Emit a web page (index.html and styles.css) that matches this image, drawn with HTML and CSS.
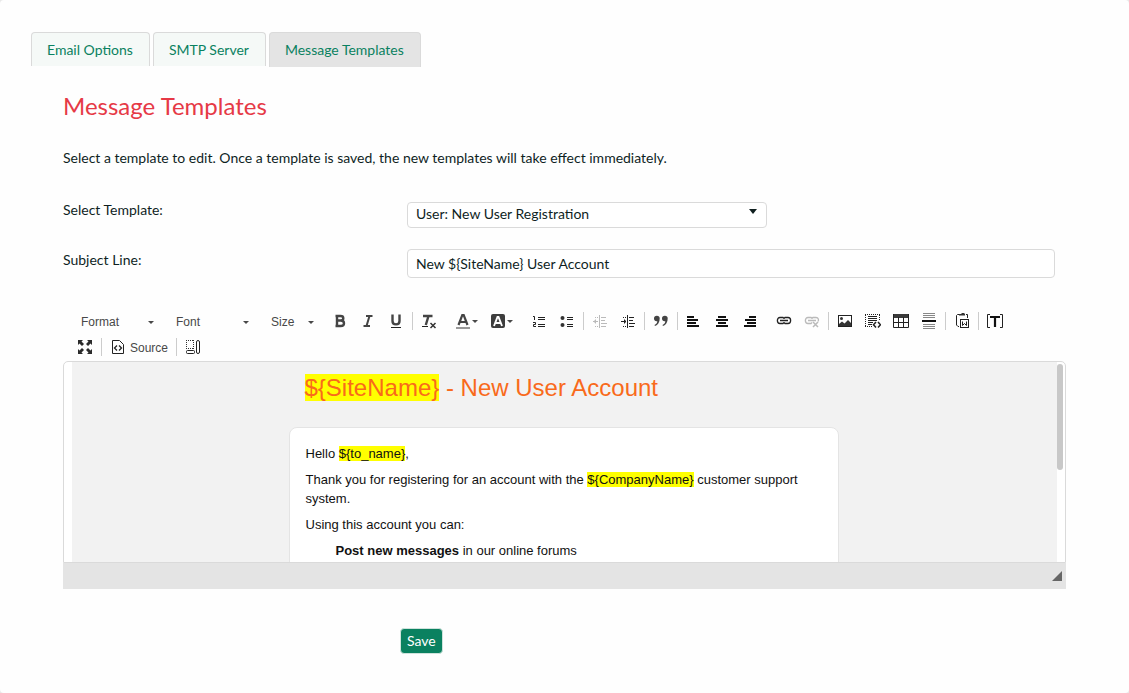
FILE: index.html
```html
<!DOCTYPE html>
<html lang="en">
<head>
<meta charset="utf-8">
<title>Message Templates</title>
<link rel="stylesheet" href="styles.css">
</head>
<body>
<main class="page">
  <nav class="tabs">
    <a class="tab" href="#options">Email Options</a>
    <a class="tab" href="#smtp">SMTP Server</a>
    <a class="tab tab-active" href="#templates" aria-current="page">Message Templates</a>
  </nav>
  <form class="content">
    <h1 class="title">Message Templates</h1>
    <p class="intro">Select a template to edit. Once a template is saved, the new templates will take effect immediately.</p>
    <div class="field">
      <label class="label" for="template">Select Template:</label>
      <div class="select-wrap">
        <select class="select" id="template"><option>User: New User Registration</option></select>
      </div>
    </div>
    <div class="field field-text">
      <label class="label" for="subject">Subject Line:</label>
      <input class="input" id="subject" type="text" value="New ${SiteName} User Account">
    </div>

    <div class="editor">
      <div class="toolbar">
        <div class="row">
          <div class="group combos">
            <button type="button" class="combo">Format<i class="arrow"></i></button>
            <button type="button" class="combo">Font<i class="arrow"></i></button>
            <button type="button" class="combo combo-small">Size<i class="arrow"></i></button>
          </div>
          <div class="group">
            <button type="button" class="tool" aria-label="Bold"><svg viewBox="0 0 16 16"><path d="M3.500 3H8.500C10.500 3 11.300 3.800 11.300 5.200S10.300 7.500 8.800 7.500H5.500M8.800 7.500C11 7.500 12 8.500 12 10.200S10.800 13 8.700 13H3.500M5 2V14" fill="none" stroke="#444" stroke-width="2.400"/></svg></button>
            <button type="button" class="tool" aria-label="Italic"><svg viewBox="0 0 16 16"><path d="M6 3H12.500M3.500 13H10M9.500 3L6.500 13" fill="none" stroke="#444" stroke-width="2"/></svg></button>
            <button type="button" class="tool" aria-label="Underline"><svg viewBox="0 0 16 16"><path d="M4.500 1.500V8C4.500 12.500 11.500 12.500 11.500 8V1.500" fill="none" stroke="#444" stroke-width="2.400"/><path d="M3 14.500H13" stroke="#222"/></svg></button>
            <i class="sep"></i>
            <button type="button" class="tool" aria-label="Remove format"><svg viewBox="0 0 16 16"><path d="M2 3H11.500M7.500 3L4.800 12" fill="none" stroke="#444" stroke-width="2.400"/><path d="M1 13.500H7" stroke="#222"/><path d="M9.500 10L14.500 15M14.500 10L9.500 15" stroke="#333" stroke-width="1.500"/></svg></button>
          </div>
          <div class="group">
            <button type="button" class="tool tool-menu" aria-label="Text color"><svg viewBox="0 0 16 16"><path d="M3.500 12L7.300 2H8.700L12.500 12M5 9H11" fill="none" stroke="#444" stroke-width="2.200"/><path d="M1 15H15" stroke="#999" stroke-width="2"/></svg><i class="arrow"></i></button>
            <button type="button" class="tool tool-menu" aria-label="Background color"><svg viewBox="0 0 16 16"><rect x="1" y="1" width="14" height="14" rx="2" fill="#3d3d3d"/><path d="M4 13L7.500 4H8.500L12 13M5.500 10H10.500" fill="none" stroke="#fff" stroke-width="1.900"/></svg><i class="arrow"></i></button>
          </div>
          <div class="group">
            <button type="button" class="tool" aria-label="Numbered list"><svg viewBox="0 0 16 16"><path d="M2 3.500H3.500V7M2 9.500H4.500V11.500H2.500V13.500H5M7 4.500H14M7 6.500H14M7 11.500H14M7 13.500H14" fill="none" stroke="#222"/></svg></button>
            <button type="button" class="tool" aria-label="Bulleted list"><svg viewBox="0 0 16 16"><circle cx="3.500" cy="5" r="2" fill="#333"/><circle cx="3.500" cy="12" r="2" fill="#333"/><path d="M8 4.500H14M8 6.500H14M8 11.500H14M8 13.500H14" stroke="#222"/></svg></button>
            <i class="sep"></i>
            <button type="button" class="tool" aria-label="Decrease indent" disabled><svg viewBox="0 0 16 16"><path d="M1 8.500H6M3.500 6.500V10.500M2.500 7.500V9.500M7.500 2V15M9 4.500H14M9 7.500H13M9 10.500H15M9 13.500H14" fill="none" stroke="#222"/><path d="M3 4.500H7M3 13.500H7" stroke="#222" stroke-dasharray="1 1"/></svg></button>
            <button type="button" class="tool" aria-label="Increase indent"><svg viewBox="0 0 16 16"><path d="M1 8.500H6M4.500 6.500V10.500M5.500 7.500V9.500M7.500 2V15M9 4.500H14M9 7.500H13M9 10.500H15M9 13.500H14" fill="none" stroke="#222"/><path d="M3 4.500H7M3 13.500H7" stroke="#222" stroke-dasharray="1 1"/></svg></button>
            <i class="sep"></i>
            <button type="button" class="tool" aria-label="Block quote"><svg viewBox="0 0 16 16"><path d="M1 5.500A2.800 2.800 0 1 1 6.700 5.500C6.700 9 5 12 2 13L1.500 12C3.300 11 4.200 10 4.300 8.200C2.500 8.600 1 7.500 1 5.500ZM9 5.500A2.800 2.800 0 1 1 14.700 5.500C14.700 9 13 12 10 13L9.500 12C11.300 11 12.200 10 12.300 8.200C10.500 8.600 9 7.500 9 5.500Z" fill="#444"/></svg></button>
            <i class="sep"></i>
            <button type="button" class="tool" aria-label="Align left"><svg viewBox="0 0 16 16"><path d="M1 4H8M1 7H12M1 10H10M1 13H13" stroke="#111" stroke-width="2" shape-rendering="crispEdges"/></svg></button>
            <button type="button" class="tool" aria-label="Center"><svg viewBox="0 0 16 16"><path d="M4 4H12M2 7H14M4 10H12M2 13H14" stroke="#111" stroke-width="2" shape-rendering="crispEdges"/></svg></button>
            <button type="button" class="tool" aria-label="Align right"><svg viewBox="0 0 16 16"><path d="M7 4H14M3 7H14M5 10H14M2 13H14" stroke="#111" stroke-width="2" shape-rendering="crispEdges"/></svg></button>
          </div>
          <div class="group">
            <button type="button" class="tool" aria-label="Link"><svg viewBox="0 0 16 16"><path d="M8 5.500L7 4.500H4C.5 4.500 .5 10.500 4 10.500H7L8 9.500M8 5.500L9 4.500H12C15.500 4.500 15.500 10.500 12 10.500H9L8 9.500M4 7.500H12" fill="none" stroke="#222" stroke-width="1.300"/></svg></button>
            <button type="button" class="tool" aria-label="Unlink" disabled><svg viewBox="0 0 16 16"><path d="M8 5.500L7 4.500H4C.5 4.500 .5 10.500 4 10.500H7L8 9.500M8 5.500L9 4.500H12C14.500 4.500 15 7 14 8.500M4 7.500H12" fill="none" stroke="#222" stroke-width="1.300"/><path d="M9 9L14 14M14 9L9 14" stroke="#222" stroke-width="1.500"/></svg></button>
            <i class="sep"></i>
            <button type="button" class="tool" aria-label="Image"><svg viewBox="0 0 16 16"><rect x="1.500" y="2.500" width="13" height="11" fill="none" stroke="#222"/><path d="M2 13V11L5 8.500L7.500 10.500L11 7L14 10V13Z" fill="#333"/><circle cx="4.500" cy="5.500" r="1.500" fill="#333"/></svg></button>
            <button type="button" class="tool" aria-label="Code snippet"><svg viewBox="0 0 16 16"><path d="M0 1.500H15M14.500 2V8M.5 2V14M0 13.500H8" fill="none" stroke="#222" stroke-width="1" stroke-dasharray="1 1"/><path d="M3 3.500H12M3 5.500H12M3 7.500H12M3 9.500H8M3 11.500H7" stroke="#222"/><path d="M11 9L8.500 11.800L11 14.500M13 9L15.500 11.800L13 14.500" fill="none" stroke="#222" stroke-width="1.500"/></svg></button>
            <button type="button" class="tool" aria-label="Table"><svg viewBox="0 0 16 16"><path d="M0 1H16V5H0Z" fill="#3a3a3a"/><path d="M.5 1V14.500H15.500V1M0 9.500H16M5.500 4V15M10.500 4V15" fill="none" stroke="#222"/></svg></button>
            <button type="button" class="tool" aria-label="Page break"><svg viewBox="0 0 16 16"><path d="M2 .5H14M2 2.500H14M2 4.500H14M2 11.500H14M2 13.500H14M2 15.500H14" stroke="#888"/><path d="M1 8H15" stroke="#111" stroke-width="2"/></svg></button>
            <i class="sep"></i>
            <button type="button" class="tool" aria-label="Paste from Word"><svg viewBox="0 0 16 16"><path d="M5 1.500H3.500L2.500 2.500V12L4 13.500H5M12 1.500H13.500V5" fill="none" stroke="#222"/><path d="M5 2.500V1H7L8 0H10L11 1V2.500Z" fill="#333"/><rect x="6.500" y="6.500" width="8" height="8" fill="none" stroke="#222"/><path d="M8.500 8.500V12.500L10.500 10.500L12.500 12.500V8.500" fill="none" stroke="#222"/></svg></button>
            <i class="sep"></i>
            <button type="button" class="tool" aria-label="Insert token"><svg viewBox="0 0 18 16"><path d="M4 1.500H1.500V14.500H4M14 1.500H16.500V14.500H14" fill="none" stroke="#222"/><path d="M4 4H14M9 4V14" fill="none" stroke="#111" stroke-width="2.200"/></svg></button>
          </div>
        </div>
        <div class="row">
          <div class="group">
            <button type="button" class="tool" aria-label="Maximize"><svg viewBox="0 0 16 16"><path d="M1 1H6L4.500 2.500L7 5L5 7L2.500 4.500L1 6ZM15 1H10L11.500 2.500L9 5L11 7L13.500 4.500L15 6ZM1 15H6L4.500 13.500L7 11L5 9L2.500 11.500L1 10ZM15 15H10L11.500 13.500L9 11L11 9L13.500 11.500L15 10Z" fill="#2b2b2b"/></svg></button>
            <i class="sep"></i>
            <button type="button" class="tool tool-text"><svg viewBox="0 0 16 16"><path d="M2.500 1.500H9.500L13.500 5.500V14.500H2.500Z" fill="none" stroke="#222"/><path d="M7 6.500L4.500 9L7 11.500M9 6.500L11.500 9L9 11.500" fill="none" stroke="#222" stroke-width="1.300"/></svg><span class="text">Source</span></button>
            <i class="sep"></i>
            <button type="button" class="tool" aria-label="Show blocks"><svg viewBox="0 0 16 16"><path d="M1 1.500H9M1.500 1V10M8.500 1V10M1 9.500H9" fill="none" stroke="#333" stroke-dasharray="1 1"/><rect x="1.500" y="11.500" width="8" height="3" rx="1" fill="none" stroke="#222"/><rect x="11.500" y="1.500" width="3" height="13" rx="1.500" fill="none" stroke="#222"/></svg></button>
          </div>
        </div>
      </div>
      <div class="viewport">
        <div class="canvas" contenteditable="true" aria-label="Message body">
          <div class="mail">
            <h2 class="mail-title"><mark>${SiteName}</mark> - New User Account</h2>
            <div class="card">
              <p>Hello <mark>${to_name}</mark>,</p>
              <p>Thank you for registering for an account with the <mark>${CompanyName}</mark> customer support system.</p>
              <p>Using this account you can:</p>
              <p class="item"><b>Post new messages</b> in our online forums</p>
            </div>
          </div>
        </div>
        <div class="track"><div class="thumb"></div></div>
      </div>
      <div class="statusbar"><svg class="resizer" viewBox="0 0 10 10"><path d="M0 10L10 0V10Z" fill="#666"/></svg></div>
    </div>
    <button type="submit" class="save">Save</button>
  </form>
</main>
</body>
</html>
```
FILE: styles.css
```css
* { box-sizing: border-box; }
body {
  margin: 0;
  background: #e8e8e8;
  color: #0f1f1f;
  font: 14px/20px Lato, sans-serif;
}
button, input, select { font: inherit; color: inherit; }
button { border: 0; background: none; padding: 0; cursor: pointer; }
.page {
  min-height: 100vh;
  padding: 32px 31px 39px;
  border-radius: 4px;
  background: #fefefe;
}
.tabs { display: flex; align-items: flex-start; gap: 3px; height: 35px; }
.tab {
  height: 34px;
  padding: 7px 16px 6px 15px;
  border: 1px solid #dadada;
  border-bottom: 0;
  border-radius: 4px 4px 0 0;
  background: #f5f9f7;
  color: #0a8160;
  text-decoration: none;
}
.tab-active { height: 35px; background: #e4e4e4; }
.content { padding: 0 32px; }
.title { margin: 23px 0 0; color: #e63946; font-size: 24px; font-weight: 400; line-height: 32px; }
.intro { margin: 26px 0 34px; }
.field {
  display: grid;
  grid-template-columns: 344px 1fr;
  align-items: start;
  padding-right: 11px;
  margin-bottom: 21px;
}
.label { line-height: 16px; }
.field-text .label { padding-top: 3px; }
.select-wrap { position: relative; max-width: 360px; }
.select, .input {
  display: block;
  width: 100%;
  border: 1px solid #dadada;
  border-radius: 4px;
  background: #fff;
}
.select { height: 26px; padding: 0 8px 2px; appearance: none; }
.input { height: 29px; padding: 0 8px; }
.select-wrap::after {
  content: "";
  position: absolute;
  top: 7px;
  right: 10px;
  border: 4px solid transparent;
  border-top: 5px solid #0f1f1f;
  border-bottom: 0;
}
.editor { margin-top: 30px; font: 12px/16px "Liberation Sans", Arial, sans-serif; color: #484848; }
.toolbar { padding: 0 8px 1px; }
.row { display: flex; gap: 6px; height: 26px; }
.group { display: flex; align-items: center; }
.combos { margin-left: 2px; }
.combo { display: flex; align-items: center; justify-content: space-between; width: 95px; height: 26px; padding: 2px 14px 0 8px; }
.combo-small { width: 57px; padding-right: 6px; }
.arrow { border: 3px solid transparent; border-top-color: #484848; border-bottom: 0; }
.tool { display: flex; align-items: center; justify-content: center; flex: none; width: 28px; height: 26px; }
.tool svg { flex: none; height: 16px; min-width: 16px; }
.tool:disabled { opacity: 0.3; }
.tool-menu { width: 35px; gap: 1px; }
.tool-text { width: auto; padding: 0 6px; gap: 4px; }
.text { padding-top: 2px; }
.sep { width: 1px; height: 18px; margin: 0 2px; background: #ccc; }
.viewport {
  display: flex;
  height: 202px;
  overflow: hidden;
  border: 1px solid #dadada;
  border-radius: 5px 5px 0 0;
  background: #fff;
}
.canvas { flex: 1; margin-left: 8px; padding-right: 2px; background: #f2f2f2; color: #111; font-size: 13px; line-height: 19px; outline: 0; overflow: hidden; }
.mail { max-width: 550px; margin: 0 auto; }
.mail mark { background: #ff0; color: inherit; }
.mail-title { margin: 0; padding: 11px 16px 25px; color: #f96a1b; font-size: 24px; font-weight: 400; line-height: 29px; }
.card { padding: 16px 16px 30px; border: 1px solid #e4e4e4; border-radius: 8px; background: #fff; }
.card p { margin: 0 0 7px; }
.card .item { padding-left: 30px; }
.track { width: 8px; padding: 2px 2px 0 0; }
.thumb { height: 106px; border-radius: 3px; background: #c8c8c8; }
.statusbar { display: flex; justify-content: flex-end; height: 26px; padding: 8px 4px; background: #e4e4e4; }
.resizer { width: 10px; height: 10px; }
.save {
  display: block;
  height: 26px;
  margin: 39px 0 0 337px;
  padding: 0 6px;
  border: 1px solid #cfe3dc;
  border-radius: 4px;
  background: #0a8160;
  color: #fff;
}
```
